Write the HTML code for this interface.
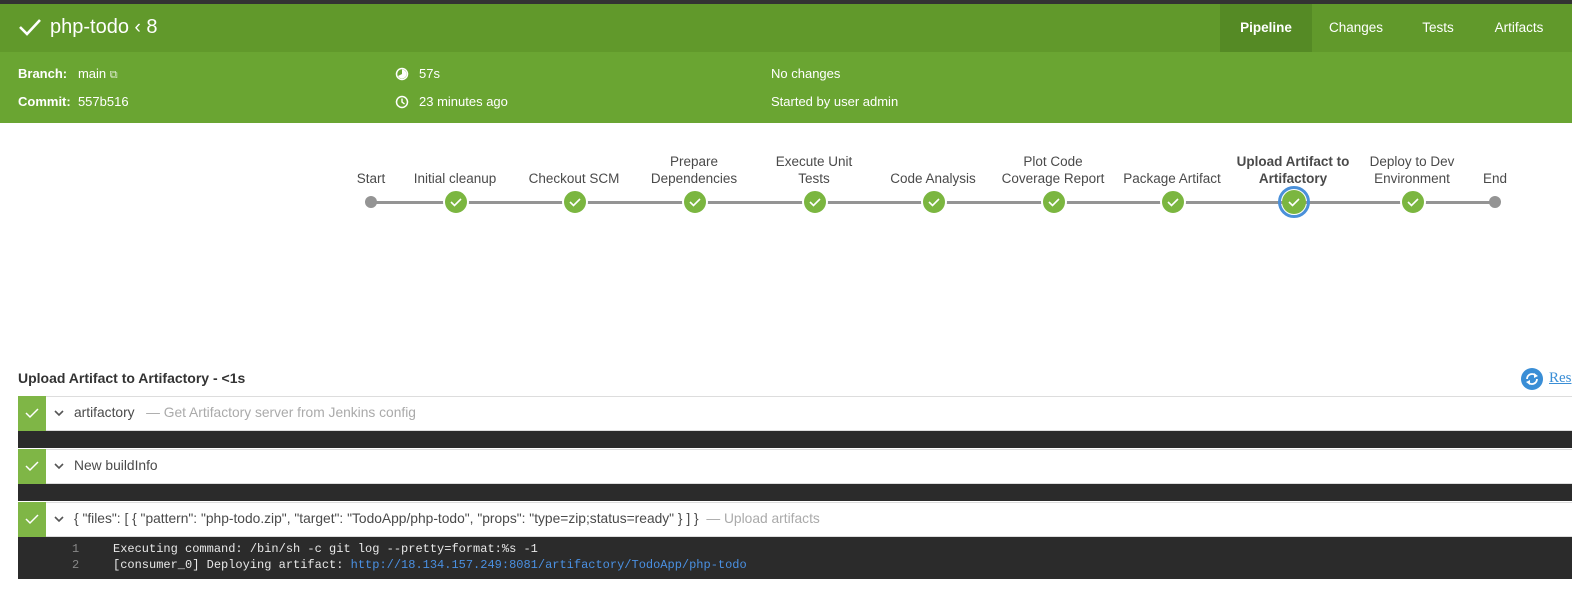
<!DOCTYPE html>
<html><head><meta charset="utf-8"><style>
*{margin:0;padding:0;box-sizing:border-box}
body{width:1572px;height:589px;overflow:hidden;background:#fff;font-family:"Liberation Sans",sans-serif;position:relative;color:#4a4a4a}
.a{position:absolute;white-space:nowrap}
.topbar{left:0;top:0;width:1572px;height:4px;background:#333}
.hdr{left:0;top:4px;width:1572px;height:48px;background:#61992b}
.info{left:0;top:52px;width:1572px;height:71px;background:#6aa532;color:#fff;font-size:13px}
.tab{top:4px;height:48px;line-height:48px;color:#fff;font-size:13.5px;text-align:center}
.lbl{font-size:13.5px;color:#4a4a4a;text-align:center;line-height:17px;transform:translateX(-50%)}
.node{width:26px;height:26px;border-radius:50%;background:#7bb640;border:2px solid #fff;transform:translate(-50%,-50%);top:202px}
.row{left:18px;width:1554px;background:#fff;border-top:1px solid #ddd;border-bottom:1px solid #ddd}
.chk{position:absolute;left:0;top:-1px;width:28px;background:#7fb646}
.dark{left:18px;width:1554px;background:#2b2b2b}
.t{font-size:13.8px;color:#4a4a4a}
.g{color:#aaa}
</style></head><body>
<div class="a topbar"></div>
<div class="a hdr"></div>
<svg class="a" style="left:18px;top:17px" width="24" height="20" viewBox="0 0 24 20"><path d="M2 10 L9 17 L22 3" fill="none" stroke="#fff" stroke-width="2.6"/></svg>
<div class="a" style="left:50px;top:16px;color:#fff;font-size:20px;">php-todo <span style="font-size:19px">&lsaquo;</span> 8</div>
<div class="a tab" style="left:1220px;width:92px;background:#558a25;font-weight:bold">Pipeline</div>
<div class="a tab" style="left:1312px;width:88px">Changes</div>
<div class="a tab" style="left:1405px;width:66px">Tests</div>
<div class="a tab" style="left:1481px;width:76px">Artifacts</div>
<div class="a info"></div>
<div class="a" style="left:18px;top:66px;color:#fff;font-size:13px"><b>Branch:</b>&nbsp;&nbsp;&nbsp;main <span style="font-size:11px;opacity:.8">&#x29C9;</span></div>
<div class="a" style="left:18px;top:94px;color:#fff;font-size:13px"><b>Commit:</b>&nbsp; 557b516</div>
<svg class="a" style="left:395px;top:67px" width="14" height="14"><circle cx="7" cy="7" r="5.5" fill="none" stroke="#fff" stroke-width="1.5"/><path d="M7 7 L7 2.5 A4.5 4.5 0 1 1 3 9 Z" fill="#fff"/></svg>
<div class="a" style="left:419px;top:66px;color:#fff;font-size:13px">57s</div>
<svg class="a" style="left:395px;top:95px" width="14" height="14"><circle cx="7" cy="7" r="5.5" fill="none" stroke="#fff" stroke-width="1.5"/><path d="M7 3.5 V7 L9.5 9" fill="none" stroke="#fff" stroke-width="1.4"/></svg>
<div class="a" style="left:419px;top:94px;color:#fff;font-size:13px">23 minutes ago</div>
<div class="a" style="left:771px;top:66px;color:#fff;font-size:13px">No changes</div>
<div class="a" style="left:771px;top:94px;color:#fff;font-size:13px">Started by user admin</div>

<div class="a" style="left:371px;top:201px;width:1124px;height:3px;background:#949494"></div>
<div class="a" style="left:365px;top:196px;width:12px;height:12px;border-radius:50%;background:#949494"></div>
<div class="a" style="left:1489px;top:196px;width:12px;height:12px;border-radius:50%;background:#949494"></div>

<div class="a lbl" style="left:371px;top:170px">Start</div>
<div class="a lbl" style="left:455px;top:170px">Initial cleanup</div>
<div class="a lbl" style="left:574px;top:170px">Checkout SCM</div>
<div class="a lbl" style="left:694px;top:153px">Prepare<br>Dependencies</div>
<div class="a lbl" style="left:814px;top:153px">Execute Unit<br>Tests</div>
<div class="a lbl" style="left:933px;top:170px">Code Analysis</div>
<div class="a lbl" style="left:1053px;top:153px">Plot Code<br>Coverage Report</div>
<div class="a lbl" style="left:1172px;top:170px">Package Artifact</div>
<div class="a lbl" style="left:1293px;top:153px;font-weight:bold">Upload Artifact to<br>Artifactory</div>
<div class="a lbl" style="left:1412px;top:153px">Deploy to Dev<br>Environment</div>
<div class="a lbl" style="left:1495px;top:170px">End</div>

<div class="a node" style="left:456px"></div>
<div class="a node" style="left:575px"></div>
<div class="a node" style="left:695px"></div>
<div class="a node" style="left:815px"></div>
<div class="a node" style="left:934px"></div>
<div class="a node" style="left:1054px"></div>
<div class="a node" style="left:1173px"></div>
<div class="a" style="left:1294px;top:202px;width:32px;height:32px;border-radius:50%;border:3px solid #4a90d9;transform:translate(-50%,-50%)"></div>
<div class="a node" style="left:1294px;width:24px;height:24px;border:none"></div>
<div class="a node" style="left:1413px"></div>
<svg class="a" style="left:1px;top:0" width="1572" height="240">
<g fill="none" stroke="#fff" stroke-width="1.6">
<path d="M450 202 l3.5 3.5 l6.5 -6.5"/><path d="M569 202 l3.5 3.5 l6.5 -6.5"/><path d="M689 202 l3.5 3.5 l6.5 -6.5"/><path d="M809 202 l3.5 3.5 l6.5 -6.5"/><path d="M928 202 l3.5 3.5 l6.5 -6.5"/><path d="M1048 202 l3.5 3.5 l6.5 -6.5"/><path d="M1167 202 l3.5 3.5 l6.5 -6.5"/><path d="M1288 202 l3.5 3.5 l6.5 -6.5"/><path d="M1407 202 l3.5 3.5 l6.5 -6.5"/>
</g></svg>

<div class="a" style="left:18px;top:370px;font-size:14px;font-weight:bold;color:#333">Upload Artifact to Artifactory - &lt;1s</div>
<div class="a" style="left:1521px;top:368px;width:22px;height:22px;border-radius:50%;background:#3a8ed6"></div>
<svg class="a" style="left:1521px;top:368px" width="22" height="22"><g fill="none" stroke="#fff" stroke-width="1.8"><path d="M6 11 A5 5 0 0 1 15 8"/><path d="M16 11 A5 5 0 0 1 7 14"/></g><path d="M13 5 L17 8 L13 10Z M9 17 L5 14 L9 12Z" fill="#fff"/></svg>
<div class="a" style="left:1549px;top:370px;font-size:15px;color:#3a8ed6;text-decoration:underline;font-family:'Liberation Serif',serif">Res</div>

<div class="a row" style="top:396px;height:35px"><div class="chk" style="height:35px"></div></div>
<div class="a dark" style="top:431px;height:17px"></div>
<div class="a row" style="top:449px;height:35px"><div class="chk" style="height:35px"></div></div>
<div class="a dark" style="top:484px;height:17px"></div>
<div class="a row" style="top:502px;height:35px"><div class="chk" style="height:35px"></div></div>
<div class="a dark" style="top:537px;height:42px"></div>
<svg class="a" style="left:18px;top:396px" width="60" height="141" fill="none" stroke="#fff" stroke-width="1.5">
<path d="M8 17 l4 4 l8 -8"/><path d="M8 70 l4 4 l8 -8"/><path d="M8 123 l4 4 l8 -8"/>
<g stroke="#555" stroke-width="1.6"><path d="M37 15 l4 4 l4 -4"/><path d="M37 68 l4 4 l4 -4"/><path d="M37 121 l4 4 l4 -4"/></g>
</svg>
<div class="a t" style="left:74px;top:405px">artifactory &nbsp;&nbsp;<span class="g">— Get Artifactory server from Jenkins config</span></div>
<div class="a t" style="left:74px;top:458px">New buildInfo</div>
<div class="a t" style="left:74px;top:511px">{ "files": [ { "pattern": "php-todo.zip", "target": "TodoApp/php-todo", "props": "type=zip;status=ready" } ] } &nbsp;<span class="g">— Upload artifacts</span></div>
<div class="a" style="left:72px;top:541px;font-family:'Liberation Mono',monospace;font-size:12px;line-height:16px;color:#888">1<br>2</div>
<div class="a" style="left:113px;top:541px;font-family:'Liberation Mono',monospace;font-size:12px;line-height:16px;color:#e8e8e8">Executing command: /bin/sh -c git log --pretty=format:%s -1<br>[consumer_0] Deploying artifact: <span style="color:#4a90e2">http://18.134.157.249:8081/artifactory/TodoApp/php-todo</span></div>
</body></html>
